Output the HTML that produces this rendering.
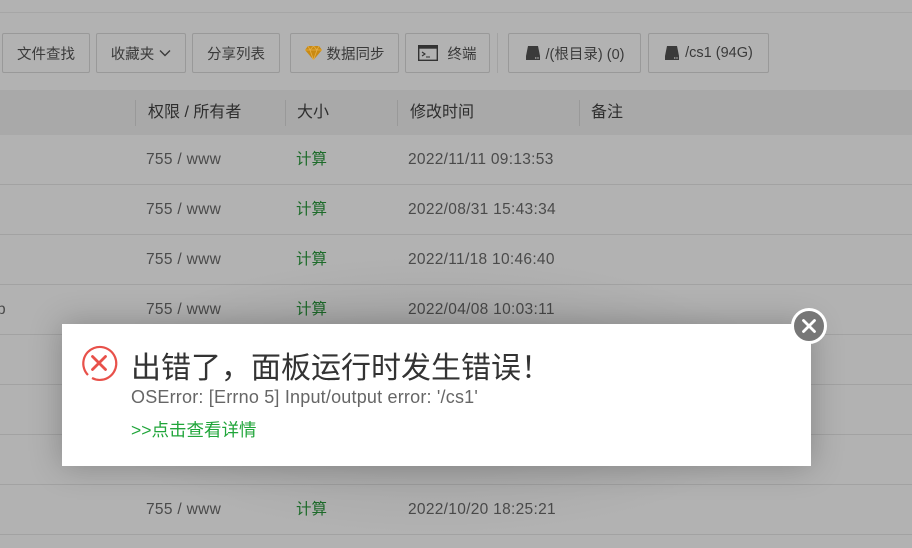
<!DOCTYPE html>
<html><head><meta charset="utf-8"><style>
*{margin:0;padding:0;box-sizing:border-box}
body{width:912px;height:548px;overflow:hidden;background:#b2b2b2;font-family:"Liberation Sans","Noto Sans CJK SC",sans-serif;position:relative}
.topline{position:absolute;left:0;right:0;top:12px;border-top:1px solid #a6a6a6}
.btn{position:absolute;top:33px;height:40px;border:1px solid #999;border-radius:2px;font-size:14.5px;color:#3a3a3a;display:flex;align-items:center;justify-content:center;gap:5px;background:#b2b2b2}
.sep{position:absolute;left:497px;top:33px;height:40px;border-left:1px solid #a2a2a2}
.thead{position:absolute;top:90px;left:0;right:0;height:45px;background:#a9a9a9}
.th{position:absolute;top:0;height:45px;line-height:45px;font-size:16px;color:#2e2e2e}
.div{position:absolute;top:10px;height:26px;border-left:1px solid #999}
.row{position:absolute;left:0;right:0;height:50px;border-bottom:1px solid #a2a2a2;font-size:15.5px;color:#4a4a4a}
.row span{position:absolute;top:0;line-height:50px}
.row span.d{letter-spacing:.3px}
.g{color:#1d6b2a}
.shade{position:absolute;inset:0;background:radial-gradient(ellipse 520px 200px at 436px 395px,rgba(0,0,0,.12),rgba(0,0,0,0) 70%)}
.modal{position:absolute;left:62px;top:324px;width:749px;height:142px;background:#fff;box-shadow:0 0 30px rgba(0,0,0,.25)}
.title{position:absolute;left:69px;top:19px;font-size:30px;color:#333;white-space:nowrap}
.msg{position:absolute;left:69px;top:63px;font-size:18px;color:#666;white-space:nowrap;letter-spacing:.2px}
.link{position:absolute;left:69px;top:93px;font-size:17.5px;color:#20a53a;white-space:nowrap}
.close{position:absolute;left:791px;top:308px;width:36px;height:36px;border-radius:50%;background:#777;border:3px solid #fff}
</style></head><body>
<div class="topline"></div>
<div class="btn" style="left:2px;width:88px">文件查找</div>
<div class="btn" style="left:96px;width:90px">收藏夹<svg width="12" height="8" viewBox="0 0 12 8"><path d="M1 1.5L6 6.5 11 1.5" fill="none" stroke="#3a3a3a" stroke-width="1.4"/></svg></div>
<div class="btn" style="left:192px;width:88px">分享列表</div>
<div class="btn" style="left:290px;width:109px"><svg width="17" height="14" viewBox="0 0 17 14"><path d="M3 0h11l3 4-8.5 10L0 4z" fill="#c98a12"/><path d="M0 4h17M5 4l3.5 10L12 4M3 0l2 4 3.5-4 3.5 4 2-4" fill="none" stroke="#e6b04a" stroke-width=".8"/></svg>数据同步</div>
<div class="btn" style="left:405px;width:85px"><svg width="20" height="16" viewBox="0 0 20 16"><rect x=".7" y=".7" width="18.6" height="14.6" fill="none" stroke="#333" stroke-width="1.4"/><rect x=".7" y=".7" width="18.6" height="3" fill="#333"/><path d="M4 7l3 2-3 2M8 12h4" fill="none" stroke="#333" stroke-width="1.1"/></svg>&nbsp;终端</div>
<div class="sep"></div>
<div class="btn" style="left:508px;width:133px"><svg width="16" height="16" viewBox="0 0 16 16"><path d="M3 1h10l2 10H1z" fill="#3a3a3a"/><rect x="1" y="11" width="14" height="4" fill="#3a3a3a"/><rect x="10" y="12.3" width="1.4" height="1.4" fill="#aaa"/><rect x="12.3" y="12.3" width="1.4" height="1.4" fill="#aaa"/></svg>/(根目录) (0)</div>
<div class="btn" style="left:648px;width:121px"><svg width="16" height="16" viewBox="0 0 16 16"><path d="M3 1h10l2 10H1z" fill="#3a3a3a"/><rect x="1" y="11" width="14" height="4" fill="#3a3a3a"/><rect x="10" y="12.3" width="1.4" height="1.4" fill="#aaa"/><rect x="12.3" y="12.3" width="1.4" height="1.4" fill="#aaa"/></svg>/cs1 (94G)</div>
<div class="thead">
<div class="div" style="left:135px"></div><span class="th" style="left:148px">权限 / 所有者</span>
<div class="div" style="left:285px"></div><span class="th" style="left:297px">大小</span>
<div class="div" style="left:397px"></div><span class="th" style="left:410px">修改时间</span>
<div class="div" style="left:579px"></div><span class="th" style="left:591px">备注</span>
</div>
<div class="row" style="top:135px"><span class="d" style="left:146px">755 / www</span><span class="g" style="left:296px">计算</span><span class="d" style="left:408px">2022/11/11 09:13:53</span></div>
<div class="row" style="top:185px"><span class="d" style="left:146px">755 / www</span><span class="g" style="left:296px">计算</span><span class="d" style="left:408px">2022/08/31 15:43:34</span></div>
<div class="row" style="top:235px"><span class="d" style="left:146px">755 / www</span><span class="g" style="left:296px">计算</span><span class="d" style="left:408px">2022/11/18 10:46:40</span></div>
<div class="row" style="top:285px"><span style="left:-3px">p</span><span class="d" style="left:146px">755 / www</span><span class="g" style="left:296px">计算</span><span class="d" style="left:408px">2022/04/08 10:03:11</span></div>
<div class="row" style="top:335px"></div>
<div class="row" style="top:385px"></div>
<div class="row" style="top:435px"></div>
<div class="row" style="top:485px"><span class="d" style="left:146px">755 / www</span><span class="g" style="left:296px">计算</span><span class="d" style="left:408px">2022/10/20 18:25:21</span></div>
<div class="shade"></div>
<div class="modal">
<svg style="position:absolute;left:18px;top:20px" width="38" height="38" viewBox="0 0 38 38"><path d="M8 31A16.5 16.5 0 1 1 12 34" fill="none" stroke="#e8514a" stroke-width="2.2"/><path d="M12.5 12.5l13 13M25.5 12.5l-13 13" stroke="#e8514a" stroke-width="2.8" stroke-linecap="round"/></svg>
<div class="title">出错了，面板运行时发生错误！</div>
<div class="msg">OSError: [Errno 5] Input/output error: '/cs1'</div>
<div class="link">&gt;&gt;点击查看详情</div>
</div>
<div class="close"><svg width="30" height="30" viewBox="0 0 30 30"><path d="M9.5 9.5l11 11M20.5 9.5l-11 11" stroke="#fff" stroke-width="2.8" stroke-linecap="round"/></svg></div>
</body></html>
